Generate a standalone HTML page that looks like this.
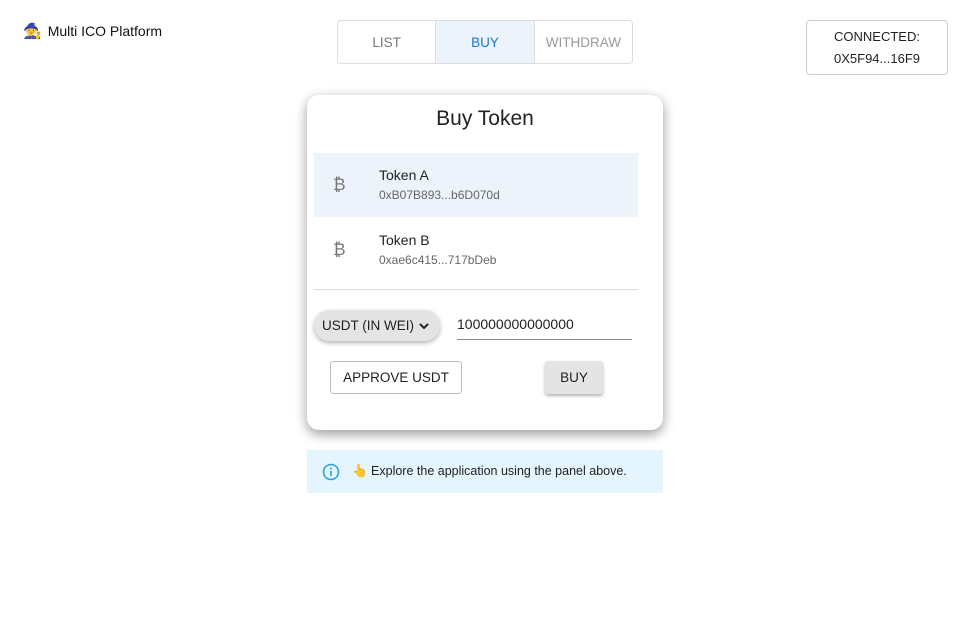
<!DOCTYPE html>
<html><head><meta charset="utf-8"><style>
*{box-sizing:border-box;margin:0;padding:0}
body{width:970px;height:643px;background:#fff;font-family:"Liberation Sans",Arial,sans-serif;position:relative;overflow:hidden;color:#222}
.logo{position:absolute;left:23px;top:22px;font-size:14px;color:#111;display:flex;align-items:center;gap:6px}
.tabs{position:absolute;left:337px;top:20px;width:296px;height:44px;border:1px solid #ddd;border-radius:4px;display:flex;overflow:hidden}
.tabs div{flex:1;display:flex;align-items:center;justify-content:center;font-size:13.5px;color:#777;border-right:1px solid #ddd}
.tabs div:last-child{border-right:none;color:#999}
.tabs .act{background:#ecf3fb;color:#1976d2}
.conn{position:absolute;left:806px;top:20px;width:142px;height:55px;border:1px solid #ccc;border-radius:4px;text-align:center;font-size:13px;line-height:22px;padding-top:5px;color:#222}
.card{position:absolute;left:307px;top:95px;width:356px;height:335px;background:#fff;border-radius:12px;box-shadow:0 4px 12px rgba(0,0,0,.4)}
h1{font-weight:normal;font-size:21px;text-align:center;margin-top:12px;color:#222}
.item{position:absolute;left:7px;width:324px;height:64px}
.item .ic{position:absolute;left:19px;top:22px;font-size:17px;color:#777}
.item .t{position:absolute;left:65px;top:14px;font-size:14px;color:#222}
.item .a{position:absolute;left:65px;top:35px;font-size:12px;color:#666}
.hr{position:absolute;left:7px;top:194px;width:324px;border-top:1px solid #ddd}
.sel{position:absolute;left:7px;top:215px;width:126px;height:31px;border-radius:16px;background:#e4e4e4;box-shadow:0 2px 5px rgba(0,0,0,.3);font-size:13.5px;line-height:31px;padding-left:8px;color:#222}
.inp{position:absolute;left:150px;top:221px;width:175px;height:24px;border-bottom:1px solid #888;font-size:14px;color:#222}
.btn1{position:absolute;left:23px;top:266px;width:132px;height:33px;border:1px solid #bbb;border-radius:3px;font-size:13.5px;text-align:center;line-height:31px}
.btn2{position:absolute;left:238px;top:266px;width:58px;height:33px;background:#e4e4e4;border-radius:3px;box-shadow:0 2px 3px rgba(0,0,0,.3);font-size:13.5px;text-align:center;line-height:33px}
.info{position:absolute;left:307px;top:450px;width:356px;height:43px;background:#e5f5fd;font-size:12.5px;display:flex;align-items:center;padding-left:15px;gap:12px;color:#222}
</style></head><body>
<div class="logo"><span style="font-size:15px">🧙</span>Multi ICO Platform</div>
<div class="tabs"><div>LIST</div><div class="act">BUY</div><div>WITHDRAW</div></div>
<div class="conn">CONNECTED:<br>0X5F94...16F9</div>
<div class="card">
<h1>Buy Token</h1>
<div class="item" style="top:58px;background:#ecf3fb"><span class="ic">₿</span><span class="t">Token A</span><span class="a">0xB07B893...b6D070d</span></div>
<div class="item" style="top:123px"><span class="ic">₿</span><span class="t">Token B</span><span class="a">0xae6c415...717bDeb</span></div>
<div class="hr"></div>
<div class="sel">USDT (IN WEI) <svg width="12" height="10" viewBox="0 0 12 10" style="vertical-align:middle"><path d="M2 3l4 4 4-4" stroke="#222" stroke-width="2" fill="none"/></svg></div>
<div class="inp">100000000000000</div>
<div class="btn1">APPROVE USDT</div>
<div class="btn2">BUY</div>
</div>
<div class="info"><svg width="18" height="18" viewBox="0 0 18 18"><circle cx="9" cy="9" r="7.5" stroke="#29a3e8" stroke-width="1.6" fill="none"/><rect x="8.2" y="8" width="1.6" height="5" fill="#29a3e8"/><circle cx="9" cy="5.6" r="1" fill="#29a3e8"/></svg><span>👆 Explore the application using the panel above.</span></div>
</body></html>
